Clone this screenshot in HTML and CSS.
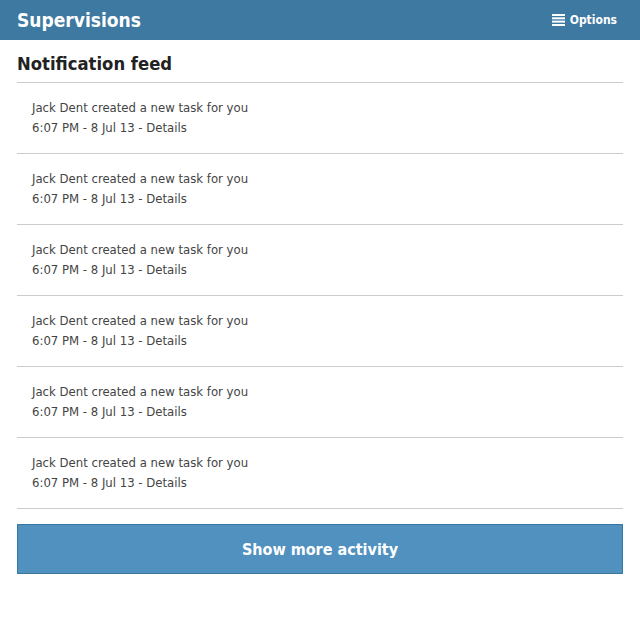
FILE: index.html
```html
<!DOCTYPE html>
<html>
<head>
<meta charset="utf-8">
<link rel="stylesheet" href="styles.css">
</head>
<body>
<header class="topbar">
  <h1 class="brand">Supervisions</h1>
  <a class="options" href="#">
    <svg class="options-icon" width="13" height="12" viewBox="0 0 13 12"><rect x="0" y="0" width="13" height="2" fill="#fff"/><rect x="0" y="3.3" width="13" height="2" fill="#fff"/><rect x="0" y="6.6" width="13" height="2" fill="#fff"/><rect x="0" y="10" width="13" height="2" fill="#fff"/></svg>
    <span>Options</span>
  </a>
</header>
<main class="content">
  <h2 class="section-title">Notification feed</h2>
  <ul class="feed">
    <li class="feed-item"><p class="feed-text">Jack Dent created a new task for you</p><p class="feed-meta">6:07 PM - 8 Jul 13 - Details</p></li>
    <li class="feed-item"><p class="feed-text">Jack Dent created a new task for you</p><p class="feed-meta">6:07 PM - 8 Jul 13 - Details</p></li>
    <li class="feed-item"><p class="feed-text">Jack Dent created a new task for you</p><p class="feed-meta">6:07 PM - 8 Jul 13 - Details</p></li>
    <li class="feed-item"><p class="feed-text">Jack Dent created a new task for you</p><p class="feed-meta">6:07 PM - 8 Jul 13 - Details</p></li>
    <li class="feed-item"><p class="feed-text">Jack Dent created a new task for you</p><p class="feed-meta">6:07 PM - 8 Jul 13 - Details</p></li>
    <li class="feed-item"><p class="feed-text">Jack Dent created a new task for you</p><p class="feed-meta">6:07 PM - 8 Jul 13 - Details</p></li>
  </ul>
  <button class="more-btn">Show more activity</button>
</main>
</body>
</html>
```
FILE: styles.css
```css
html, body {
  margin: 0;
  padding: 0;
  background: #fff;
  font-family: "DejaVu Sans Condensed", "DejaVu Sans", sans-serif;
}
.topbar {
  height: 40px;
  background: #3d79a0;
  display: flex;
  align-items: center;
  justify-content: space-between;
  padding: 0 23px 0 17px;
}
.brand {
  margin: 0;
  color: #fff;
  font-size: 19px;
  font-weight: bold;
}
.options {
  display: flex;
  align-items: center;
  gap: 5px;
  color: #fff;
  text-decoration: none;
  font-size: 12px;
  font-weight: bold;
}
.content {
  padding: 0 17px;
}
.section-title {
  margin: 0;
  font-size: 18.3px;
  font-weight: bold;
  color: #222;
  padding: 13px 0 8px;
  border-bottom: 1px solid #cccccc;
  line-height: 21px;
}
.feed {
  list-style: none;
  margin: 0;
  padding: 0;
}
.feed-item {
  padding: 15px 15px 15px;
  border-bottom: 1px solid #cccccc;
}
.feed-text, .feed-meta {
  margin: 0;
  font-size: 13px;
  line-height: 20px;
  color: #444;
}
.more-btn {
  display: block;
  width: 100%;
  height: 50px;
  margin-top: 15px;
  background: #5091bf;
  border: 1px solid #3a77a0;
  color: #fff;
  font-family: "DejaVu Sans Condensed", "DejaVu Sans", sans-serif;
  font-size: 16px;
  font-weight: bold;
}
```
